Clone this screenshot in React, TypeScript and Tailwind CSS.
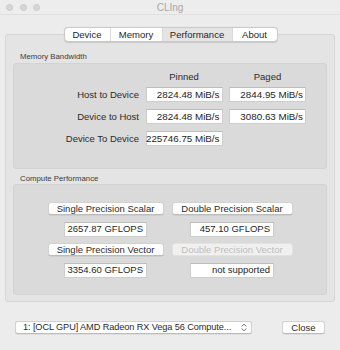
import React from "react";

const font = { fontFamily: '"Liberation Sans", Arial, sans-serif' };

function Field({ children, big }: { children: React.ReactNode; big?: boolean }) {
  return (
    <div
      className={
        "h-[15px] bg-white border border-[#cdcdcd] border-t-[#bdbdbd] flex items-center justify-end leading-none text-[#1e1e1e] whitespace-nowrap overflow-visible " +
        (big ? "text-[9.8px] pr-[2px]" : "text-[9.5px] pr-[3px]")
      }
    >
      {children}
    </div>
  );
}

function Btn({ children, disabled }: { children: React.ReactNode; disabled?: boolean }) {
  return (
    <div
      className={
        "h-[13px] rounded-[3px] flex items-center justify-center text-[9.5px] leading-none whitespace-nowrap " +
        (disabled
          ? "bg-[#f0f0f0] text-[#bdbdbd] border border-[#e2e2e2]"
          : "bg-white text-[#2a2a2a] border border-[#d2d2d2] border-b-[#bcbcbc] shadow-[0_0.5px_0.5px_rgba(0,0,0,0.12)]")
      }
    >
      {children}
    </div>
  );
}

export default function App() {
  const tabs = [
    { name: "Device", w: "w-[45px]" },
    { name: "Memory", w: "w-[52px]" },
    { name: "Performance", w: "w-[70px]", sel: true },
    { name: "About", w: "w-[45px]" },
  ];
  return (
    <div className="w-[340px] h-[350px] bg-[#ececec] flex flex-col overflow-hidden" style={font}>
      {/* Title bar */}
      <div className="relative h-[15px] flex items-center border-b border-[#e0e0e0] bg-[#ededed]">
        <div className="flex gap-[6.5px] pl-[6px]">
          <div className="w-[7px] h-[7px] rounded-full bg-[#d6d6d6] border border-[#cacaca]" />
          <div className="w-[7px] h-[7px] rounded-full bg-[#d6d6d6] border border-[#cacaca]" />
          <div className="w-[7px] h-[7px] rounded-full bg-[#d6d6d6] border border-[#cacaca]" />
        </div>
        <div className="absolute inset-0 flex items-center justify-center text-[10px] text-[#a8a8a8]">CLIng</div>
      </div>

      {/* Tabs */}
      <div className="relative z-10 mt-[12px] flex justify-center pl-[1px]">
        <div className="flex h-[15px] rounded-[4px] bg-white border border-[#c9c9c9] shadow-[0_0.5px_1px_rgba(0,0,0,0.12)] overflow-hidden">
          {tabs.map((t, i) => (
            <div
              key={t.name}
              className={
                t.w +
                " flex items-center justify-center text-[9.5px] leading-none text-[#262626] " +
                (t.sel ? "bg-[#e4e4e4] " : "") +
                (i > 0 ? "border-l border-[#dadada]" : "")
              }
            >
              {t.name}
            </div>
          ))}
        </div>
      </div>

      {/* Tab box */}
      <div className="-mt-[8px] mx-[5px] h-[268px] bg-[#e4e4e4] border border-[#d6d6d6] rounded-[3px] pt-[17px] px-[7px] flex flex-col">
        <div className="h-[10px] leading-[10px] text-[7.8px] text-[#3a3a3a] pl-[7px]">Memory Bandwidth</div>
        <div className="mt-[1px] h-[106px] bg-[#dadada] border border-[#d3d3d3] rounded-[3px] pt-[7px]">
          <div className="grid grid-cols-[125px_77px_77px] gap-x-[6.5px] text-[9.5px] text-[#2a2a2a]">
            <div className="h-[12px]" />
            <div className="h-[12px] flex items-center justify-center leading-none">Pinned</div>
            <div className="h-[12px] flex items-center justify-center leading-none">Paged</div>
          </div>
          <div className="mt-[4px] grid grid-cols-[125px_77px_77px] gap-x-[6.5px] gap-y-[7px] text-[9.5px] text-[#2a2a2a]">
            <div className="h-[15px] flex items-center justify-end leading-none">Host to Device</div>
            <Field big>2824.48 MiB/s</Field>
            <Field big>2844.95 MiB/s</Field>
            <div className="h-[15px] flex items-center justify-end leading-none">Device to Host</div>
            <Field big>2824.48 MiB/s</Field>
            <Field big>3080.63 MiB/s</Field>
            <div className="h-[15px] flex items-center justify-end leading-none whitespace-nowrap">Device To Device</div>
            <Field big>225746.75 MiB/s</Field>
            <div />
          </div>
        </div>

        <div className="mt-[5px] h-[10px] leading-[10px] text-[7.8px] text-[#3a3a3a] pl-[7px]">Compute Performance</div>
        <div className="h-[111px] bg-[#dadada] border border-[#d3d3d3] rounded-[3px] pt-[17px] flex justify-center">
          <div className="grid grid-cols-[116px_121px] gap-x-[8px] gap-y-[6.5px] h-fit">
            <Btn>Single Precision Scalar</Btn>
            <Btn>Double Precision Scalar</Btn>
            <div className="flex justify-center">
              <div className="w-[83px]">
                <Field>2657.87 GFLOPS</Field>
              </div>
            </div>
            <div className="flex justify-center">
              <div className="w-[84px]">
                <Field>457.10 GFLOPS</Field>
              </div>
            </div>
            <Btn>Single Precision Vector</Btn>
            <Btn disabled>Double Precision Vector</Btn>
            <div className="flex justify-center">
              <div className="w-[83px]">
                <Field>3354.60 GFLOPS</Field>
              </div>
            </div>
            <div className="flex justify-center">
              <div className="w-[84px]">
                <Field>not supported</Field>
              </div>
            </div>
          </div>
        </div>
      </div>

      {/* Bottom row */}
      <div className="mt-[19px] flex items-center pl-[15px]">
        <div className="w-[237px] h-[13px] bg-white rounded-[3px] border border-[#d0d0d0] border-b-[#bcbcbc] shadow-[0_0.5px_0.5px_rgba(0,0,0,0.12)] flex items-center pl-[7px] pr-[4px] text-[9.2px] leading-none text-[#2a2a2a]">
          <span className="flex-1 whitespace-nowrap tracking-[-0.1px]">1: [OCL GPU] AMD Radeon RX Vega 56 Compute...</span>
          <svg width="6" height="9" viewBox="0 0 6 9" className="ml-[2px] shrink-0">
            <path d="M1 3.2 L3 1.2 L5 3.2" fill="none" stroke="#555" strokeWidth="0.9" strokeLinecap="round" strokeLinejoin="round" />
            <path d="M1 5.8 L3 7.8 L5 5.8" fill="none" stroke="#555" strokeWidth="0.9" strokeLinecap="round" strokeLinejoin="round" />
          </svg>
        </div>
        <div className="ml-[30px] w-[43px]">
          <Btn>Close</Btn>
        </div>
      </div>
    </div>
  );
}
